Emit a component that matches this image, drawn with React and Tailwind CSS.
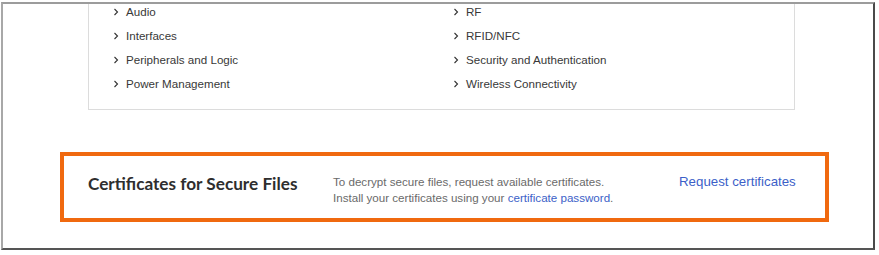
import React from "react";

const leftItems = ["Audio", "Interfaces", "Peripherals and Logic", "Power Management"];
const rightItems = ["RF", "RFID/NFC", "Security and Authentication", "Wireless Connectivity"];

const Chevron = () => (
  <svg width="13" height="8" viewBox="0 0 13 8" className="shrink-0">
    <path d="M1.5 1 L4.5 4 L1.5 7" fill="none" stroke="#333" strokeWidth="1.1" />
  </svg>
);

const Item = ({ label }) => (
  <div className="flex items-center h-[24px] text-[11.6px] text-[#383838]">
    <Chevron />
    <span>{label}</span>
  </div>
);

export default function App() {
  return (
    <div className="w-[879px] h-[255px] bg-white overflow-hidden" style={{ fontFamily: '"Liberation Sans", Arial, sans-serif' }}>
      <div className="mt-[2px] ml-[1px] w-[874px] h-[248px] border-2 border-t-[#9c9c9c] border-l-[#a8a8a8] border-r-[#4a4a4a] border-b-[#555555] overflow-hidden">
        {/* category card */}
        <div className="-mt-[20px] ml-[85px] w-[707px] border border-[#dcdcdc] pt-[15px] pb-[13px] pl-[24px]">
          <div className="grid grid-cols-[340px_1fr]">
            <div>
              {leftItems.map((l) => (
                <Item key={l} label={l} />
              ))}
            </div>
            <div>
              {rightItems.map((l) => (
                <Item key={l} label={l} />
              ))}
            </div>
          </div>
        </div>

        {/* certificates */}
        <div className="mt-[42px] ml-[57px] w-[769px] h-[70px] border-4 border-[#f0690f] flex items-start pl-[24px] pt-[17px]">
          <div
            className="w-[245px] text-[17.2px] leading-[22px] font-bold text-[#2e2e2e]"
            style={{ fontFamily: 'Lato, "Noto Sans", sans-serif' }}
          >
            Certificates for Secure Files
          </div>
          <div className="w-[346px] pt-[1px] text-[11.6px] leading-[16px] text-[#6a6a6a]">
            <div>To decrypt secure files, request available certificates.</div>
            <div>
              Install your certificates using your{" "}
              <a href="#" className="text-[#3c5fc8]">certificate password</a>.
            </div>
          </div>
          <a href="#" className="pt-[1px] text-[13.3px] leading-[16px] text-[#3c5fc8]">
            Request certificates
          </a>
        </div>
      </div>
    </div>
  );
}
